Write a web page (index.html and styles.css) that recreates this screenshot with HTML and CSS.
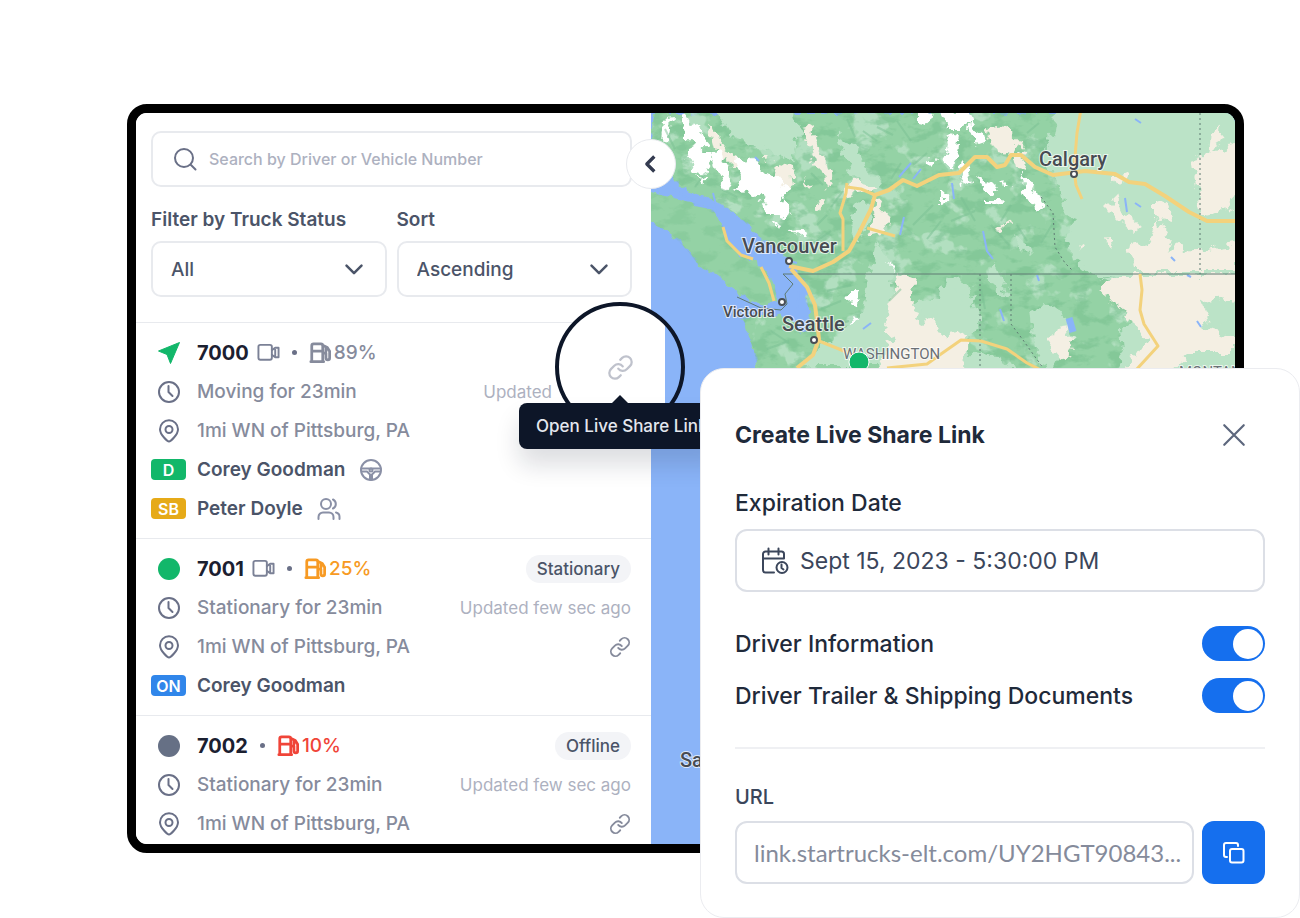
FILE: index.html
```html
<!DOCTYPE html>
<html lang="en">
<head>
  <meta charset="UTF-8" />
  <meta name="viewport" content="width=device-width, initial-scale=1.0"/>
  <title>Fleet Tracker</title>
  <link rel="stylesheet" href="styles.css">
</head>
<body>
  <!-- shared icons -->
  <svg class="sprite" aria-hidden="true">
    <symbol id="i-clock" viewBox="0 0 24 24"><circle cx="12" cy="12" r="10"/><path d="M11.500 6v6l4 4"/></symbol>
    <symbol id="i-pin" viewBox="0 0 24 24"><path d="M12 22.500c-1.300 0-9-6.500-9-12.300a9 9 0 0 1 18 0c0 5.800-7.700 12.300-9 12.300z"/><circle cx="12" cy="10.500" r="3.500"/></symbol>
    <symbol id="i-video" viewBox="0 0 24 24"><rect x="1.500" y="4" width="14" height="15.500" rx="2"/><path d="M15.500 9.500l3.500-2.500h3.500v10H19l-3.500-2.500M19 9v6"/></symbol>
    <symbol id="i-fuel" viewBox="0 0 24 24"><path d="M3 21.500V4a2 2 0 0 1 2-2h8a2 2 0 0 1 2 2v17.500M2 21.500h14M3 10h12M16 4l4 2 2.500 4v7.500a2 2 0 0 1-4 0V12H15M18.500 7v4"/></symbol>
    <symbol id="i-link" viewBox="0 0 24 24"><path d="M10 13a5 5 0 0 0 7.540.540l3-3a5 5 0 0 0-7.070-7.070l-1.720 1.710"/><path d="M14 11a5 5 0 0 0-7.540-.540l-3 3a5 5 0 0 0 7.070 7.070l1.710-1.710"/></symbol>
    <symbol id="i-chevron" viewBox="0 0 24 24"><path d="M3 8l9 9 9-9"/></symbol>
  </svg>

  <div class="stage">
    <main class="frame">
      <aside class="sidebar">
        <form class="filters">
          <label class="search">
            <svg class="icon" viewBox="0 0 24 24"><circle cx="11" cy="11" r="9"/><path d="M18 18l4.500 4.500"/></svg>
            <input type="search" aria-label="Search" placeholder="Search by Driver or Vehicle Number">
          </label>
          <div class="selects">
            <div class="field">
              <label for="status">Filter by Truck Status</label>
              <div class="select">
                <select id="status"><option>All</option></select>
                <svg class="icon"><use href="#i-chevron"/></svg>
              </div>
            </div>
            <div class="field">
              <label for="sort">Sort</label>
              <div class="select">
                <select id="sort"><option>Ascending</option></select>
                <svg class="icon"><use href="#i-chevron"/></svg>
              </div>
            </div>
          </div>
          <button class="collapse" type="button" aria-label="Collapse panel">
            <svg class="icon" viewBox="0 0 24 24"><path d="M16 3l-9 9 9 9"/></svg>
          </button>
        </form>

        <section class="vehicle">
          <div class="row">
            <span class="mark"><svg class="arrow" viewBox="0 0 24 24"><path d="M22.500 1.500L13.500 22.500l-3.500-9-8.500-3.500z"/></svg></span>
            <strong>7000</strong>
            <svg class="icon cam"><use href="#i-video"/></svg>
            <span class="dot"></span>
            <span class="fuel"><svg class="icon"><use href="#i-fuel"/></svg>89%</span>
          </div>
          <div class="row">
            <span class="mark"><svg class="icon"><use href="#i-clock"/></svg></span>
            <span>Moving for 23min</span>
            <small class="updated covered">Updated</small>
          </div>
          <div class="row">
            <span class="mark"><svg class="icon"><use href="#i-pin"/></svg></span>
            <span>1mi WN of Pittsburg, PA</span>
          </div>
          <div class="row">
            <span class="tag green">D</span>
            <span class="name">Corey Goodman</span>
            <svg class="icon role" viewBox="0 0 24 24"><circle cx="12" cy="12" r="10"/><path d="M2.500 10.500h19M3 13.500h5l3 3v5M21 13.500h-5l-3 3v5"/><circle cx="12" cy="12" r="1.500"/></svg>
          </div>
          <div class="row">
            <span class="tag amber">SB</span>
            <span class="name">Peter Doyle</span>
            <svg class="icon role" viewBox="0 0 24 24"><circle cx="9" cy="7" r="5"/><path d="M16 2.500a5 5 0 0 1 0 9M1.500 22v-2a4.500 4.500 0 0 1 4.500-4.500h6a4.500 4.500 0 0 1 4.500 4.500v2M19 15.500a4.500 4.500 0 0 1 3.500 4.500v2"/></svg>
          </div>
          <div class="spotlight">
            <button class="share" type="button" aria-describedby="share-tip" aria-label="Share">
              <svg class="icon"><use href="#i-link"/></svg>
            </button>
            <div class="tooltip" id="share-tip" role="tooltip">Open Live Share Link</div>
          </div>
        </section>

        <section class="vehicle">
          <div class="row">
            <span class="mark"><i class="state green"></i></span>
            <strong>7001</strong>
            <svg class="icon cam"><use href="#i-video"/></svg>
            <span class="dot"></span>
            <span class="fuel low"><svg class="icon"><use href="#i-fuel"/></svg>25%</span>
            <span class="pill">Stationary</span>
          </div>
          <div class="row">
            <span class="mark"><svg class="icon"><use href="#i-clock"/></svg></span>
            <span>Stationary for 23min</span>
            <small class="updated">Updated few sec ago</small>
          </div>
          <div class="row">
            <span class="mark"><svg class="icon"><use href="#i-pin"/></svg></span>
            <span>1mi WN of Pittsburg, PA</span>
            <button class="link" type="button" aria-label="Share"><svg class="icon"><use href="#i-link"/></svg></button>
          </div>
          <div class="row">
            <span class="tag blue">ON</span>
            <span class="name">Corey Goodman</span>
          </div>
        </section>

        <section class="vehicle">
          <div class="row">
            <span class="mark"><i class="state gray"></i></span>
            <strong>7002</strong>
            <span class="dot"></span>
            <span class="fuel empty"><svg class="icon"><use href="#i-fuel"/></svg>10%</span>
            <span class="pill">Offline</span>
          </div>
          <div class="row">
            <span class="mark"><svg class="icon"><use href="#i-clock"/></svg></span>
            <span>Stationary for 23min</span>
            <small class="updated">Updated few sec ago</small>
          </div>
          <div class="row">
            <span class="mark"><svg class="icon"><use href="#i-pin"/></svg></span>
            <span>1mi WN of Pittsburg, PA</span>
            <button class="link" type="button" aria-label="Share"><svg class="icon"><use href="#i-link"/></svg></button>
          </div>
        </section>
      </aside>

      <div class="map">
        <svg viewBox="0 0 584 731" preserveAspectRatio="xMinYMin slice" role="img" aria-label="Map">
          <defs>
            <filter id="rough" x="-5%" y="-5%" width="110%" height="110%">
              <feTurbulence type="fractalNoise" baseFrequency="0.09" numOctaves="3" seed="4"/>
              <feDisplacementMap in="SourceGraphic" scale="16" xChannelSelector="R" yChannelSelector="G"/>
            </filter>
            <filter id="coast" x="-5%" y="-5%" width="110%" height="110%">
              <feTurbulence type="fractalNoise" baseFrequency="0.12" numOctaves="2" seed="8"/>
              <feDisplacementMap in="SourceGraphic" scale="10" xChannelSelector="R" yChannelSelector="G"/>
            </filter>
            <filter id="relief" x="0" y="0" width="100%" height="100%" color-interpolation-filters="sRGB">
              <feTurbulence type="fractalNoise" baseFrequency="0.05 0.08" numOctaves="4" seed="11"/>
              <feColorMatrix values="0 0 0 0 0.48  0 0 0 0 0.76  0 0 0 0 0.57  6 0 0 0 -3"/>
              <feComposite in2="SourceGraphic" operator="in"/>
            </filter>
            <filter id="meadow" x="0" y="0" width="100%" height="100%" color-interpolation-filters="sRGB">
              <feTurbulence type="fractalNoise" baseFrequency="0.035" numOctaves="4" seed="23"/>
              <feColorMatrix values="0 0 0 0 0.73  0 0 0 0 0.89  0 0 0 0 0.78  0 12 0 0 -6.9"/>
              <feComposite in2="SourceGraphic" operator="in"/>
            </filter>
            <path id="land" d="M4 0L0 20 9 47 24 67 36 78 56 85 72 92 86 101 99 115 112 127 126 137 137 145 146 157 155 174 154 187 160 200 158 215 150 222 145 210 132 204 110 202 92 205 96 220 103 237 106 255 130 400H584V0z"/>
            <path id="island" d="M-6 79L19 84 42 90 62 97 71 110 74 124 89 142 102 147 114 157 124 174 127 187 116 192 99 187 79 174 66 162 49 154 36 137 19 120-6 107z"/>
          </defs>
          <rect width="584" height="731" fill="#8ab4f8"/>
          <g filter="url(#coast)" fill="#94d2a5"><use href="#land"/><use href="#island"/></g>
          <use href="#land" filter="url(#meadow)" opacity=".8"/>
          <use href="#land" filter="url(#relief)" opacity=".6"/>
          <use href="#island" filter="url(#relief)" opacity=".4"/>

          <!-- plains and valleys -->
          <g filter="url(#rough)" fill="#bbe3c7">
            <path d="M406-8H600V162H439L422 147 416 127 422 110 412 94 409 77 399 60 389 47 399 27z"/>
            <path d="M62-4L140-4 150 20 140 48 112 34 84 28z"/>
            <path d="M186 20l20 14 10 24 14 10-6 8-18-10-12-20z"/>
            <path d="M203 92l14-8 2 20-12 26-6-12z"/>
            <path d="M226 130l20 28-8 14 20 20 30-10 10-20 20 10 10 40-40 40H150l30-26 30-20z"/>
            <path d="M289 172l18 6 12 30-12 30 40 6 20 14H280z"/>
            <path d="M448 164l26 8 10 40-20 50 60 0H600V162z"/>
            <path d="M380 196l24-4 18 20-6 30-20 20-12-26z"/>
            <path d="M341 150l8 10 8 24-6 2-10-18zM362 122l12 6 6 14-10-6z"/>
          </g>
          <g filter="url(#rough)" fill="#f4efe3">
            <path d="M150 15l12-3 4 20 10 20 6 20-6 2-12-26-8-18z"/>
            <path d="M194 72l12-4 20 6-10 6-20 2z"/>
            <path d="M224 84l6 10 10 12-8 12-16 4 6-20z"/>
            <path d="M247 160l18 4-4 30 20 14 14 20 16 34H224l10-26 10-12-14-8 10-14z"/>
            <path d="M290 222l26-4-2 40h-34z"/>
            <path d="M56 10l10 6 2 12 12 14-8 8-10-16zM76 38l12 6 2 10-12 0zM126 48l16 4 2 22-14 8-6-14zM110 46l10-2-2 6zM165 90l10-2-4 8-6 2zM152 66l10 8-4 4z"/>
            <path d="M336 16l20-2 12 14-8 14-16-4zM358 36l14 8 4 12-14-4zM348 114l10-6-4 8zM362 26l10 2-2 10z"/>
            <path d="M447 178l22-16H600v30l-36 6-14 18 34 10v14l-46 0-20 18-24 6-18-8 10-30-10-26z"/>
            <path d="M540 46l28-8 20-12 4 40-16 32-26 6-4-26z"/>
            <path d="M454 94l12-12 4 16 20 16-8 6-14-12zM462 60l14 4-4 8-10-4zM504 84l10 6 6 18-16-2z"/>
            <path d="M478 134l20-4 10-22 10 20 20 10 46-6v26H484z"/>
            <path d="M403 214l14-2 4 30-10 6-12-14zM560 20l12-8-2 14-12 20zM428 130l6 2-4 6zM456 128l8 0-2 8z"/>
          </g>
          <g filter="url(#rough)" fill="#bbe3c7">
            <path d="M552 190l22-6 10 10v14l-24 2zM470 216l14-4 12 14-10 16-14-6zM516 132l12-6 2 6-10 6zM268 196l10 8-6 8-8-6z"/>
          </g>

          <!-- glaciers -->
          <g filter="url(#rough)" fill="#fff">
            <path d="M30 0l10 4 8 16 8 10-2 8-10-4-10-12zM36 34l16-4 8 14-6 16-12-4-6-12zM58 38l14 2 8 26-4 12-12-18z"/>
            <path d="M82 46l16-2 10 14 18 4 10 16-6 18 2 6-14 0-8-16-14-8-14 2 8-14z"/>
            <path d="M124 90l8-4 8 16-8 6zM140 116l14-2 4 12-10 0zM12 8l8-2-2 16-8 6zM120 106l8 6-2 4zM10 20l6-2 0 6zM46 60l10 4-2 8z"/>
            <path d="M290 2l18-6 14 10-8 8-18 0zM298 20l10 2-4 32-6 4-4-20zM320 6l10 14 8 6-12 4-8-12zM313 48l8 22-8 4-4-16z"/>
            <path d="M325 64l14 6 8 8-14 0zM370 58l12 14 14 22-10 4-14-22zM334 86l18 0-6 8-12-4zM277 44l12 4-6 8-6-6zM268-2l10 0-2 12-8-2z"/>
            <path d="M198 180l10 0-4 14-4-4zM198 202l10 6-8 4zM289 74l8 14-8 2zM234 150l8 2 2 8zM352 68l8 8-6 0z"/>
          </g>

          <!-- mountain streaks -->
          <g class="ridges">
            <path d="M180 94l12-16M166 112l10-10M160 132l20-14M212 18l14 10M226 14l16 8M246 8l14 20M250 50l-10 16M262 52l14-12M160 60l12 12M14 16l10 20M44 74l10-14M70 76l16 8M262 112l20-20M276 126l14-18M300 108l24-10M310 84l14 24M360 92l-10 16M340 112l18 20M250 176l-12 12M176 178l24-6M170 196l20-8M184 212l14-4M120 218l18 12M116 236l22-8M330 176l4 20M366 112l10 16M390 130l12-20M376 20l12-10M196 6l8 18"/>
          </g>

          <!-- lakes and inlets -->
          <g class="lakes">
            <path d="M4 78l14-4 24 14M62 80l6 24M44 92l20 4M130 146l16 4M104 44l4 4M248 64l12-14M262 66l8-10M253 104l-4 18M332 118l4 20 6 8M301 70l2 16M349 196l4 12M474 85l2 14M484 90l6 4M484 6l6 4M520 144l4 4M546 208l4 6M386 162l2 6M212 216l8-6M160 180l2 10M148 178l-2 18M536 162l4 2"/>
            <path class="lake" d="M418 205l4 14"/>
          </g>

          <!-- borders -->
          <g class="borders">
            <path d="M132 161H584"/>
            <path d="M132 161l10 10-8 10 2 10-6 6-20-2-24-11"/>
            <path class="dashed" d="M549 0v161M329 161v94M360 161v50l12 16 20 28M390 84l12 16 2 34 10 16 8 8"/>
          </g>

          <!-- highways -->
          <g class="roads">
            <path class="wide" d="M138 153l24 5 20-9 16-11 10-18 12-24 4-14 14-5 14-10 14 6 22-11 20-2 16-16 12 0 10 10 8-2 6-10 10 0 14 12 18 8 32-4 30 3 14 8 16 2 20 12 24 16 18 9h30l16-4"/>
            <path d="M224 82l-14-6-14-2M192 138V106l-3-6 6-20 1-10"/>
            <path d="M216 115l14 4 14 4"/>
            <path d="M72 114l4 14 14 14 12 4M110 154l8 16 5 18"/>
            <path class="wide" d="M140 156l16 18 8 18 2 16 2 18-6 16-16 13"/>
            <path d="M168 228l20 8 24 10M236 255l40-4 14-10 20-14 20 1 26 8 20 14 16 8"/>
            <path d="M430-4l-4 24-3 36 2 16 6 14M489 161l2 16-2 20 4 14 14 22-22 24"/>
          </g>

          <g class="towns">
            <circle cx="138" cy="148" r="3"/><circle cx="131" cy="189" r="3"/><circle cx="163" cy="227" r="3"/><circle cx="423" cy="61" r="3"/>
          </g>
          <g class="places">
            <text x="91" y="140">Vancouver</text>
            <text x="131" y="218">Seattle</text>
            <text x="388" y="53">Calgary</text>
            <text x="29" y="654">San Francisco</text>
            <text class="small" x="72" y="204">Victoria</text>
            <text class="region" x="192" y="246">WASHINGTON</text>
            <text class="region" x="528" y="264">MONTANA</text>
          </g>
          <circle cx="208" cy="249" r="10" fill="#12b76a" stroke="#fff" stroke-width="1"/>
        </svg>
      </div>
    </main>

    <form class="modal" role="dialog" aria-labelledby="modal-title">
      <header>
        <h1 id="modal-title">Create Live Share Link</h1>
        <button class="close" type="button" aria-label="Close">
          <svg class="icon" viewBox="0 0 24 24"><path d="M3 3l18 18M21 3L3 21"/></svg>
        </button>
      </header>

      <label for="expires">Expiration Date</label>
      <div class="date">
        <svg class="icon" viewBox="0 0 28 28"><path d="M23 11.500V7a2.500 2.500 0 0 0-2.500-2.500h-16A2.500 2.500 0 0 0 2 7v16a2.500 2.500 0 0 0 2.500 2.500H13M2 11.500h21M7.500 1.500v6M17.500 1.500v6"/><circle cx="21" cy="20.500" r="5.500"/><path d="M20.500 17.500v3.500l2 1.500"/></svg>
        <input id="expires" type="text" value="Sept 15, 2023 - 5:30:00 PM">
      </div>

      <div class="toggles">
        <label for="info">Driver Information</label>
        <input id="info" class="toggle" type="checkbox" checked>
        <label for="docs">Driver Trailer &amp; Shipping Documents</label>
        <input id="docs" class="toggle" type="checkbox" checked>
      </div>

      <hr>

      <label class="url-label" for="url">URL</label>
      <div class="url">
        <input id="url" type="text" value="link.startrucks-elt.com/UY2HGT90843..." readonly>
        <button class="copy" type="button" aria-label="Copy link">
          <svg class="icon" viewBox="0 0 24 24"><rect x="8" y="8" width="13.500" height="13.500" rx="2"/><path d="M5 16H4a2 2 0 0 1-2-2V4a2 2 0 0 1 2-2h10a2 2 0 0 1 2 2v1"/></svg>
        </button>
      </div>
    </form>
  </div>
</body>
</html>
```
FILE: styles.css
```css
:root {
  --ink: #1f2a3a;
  --text: #4b5468;
  --muted: #868b9c;
  --faint: #adb1bf;
  --line: #e8eaee;
  --blue: #156fee;
  --green: #12b76a;
  --navy: #0d1628;
  --sea: #8ab4f8;
}
* { box-sizing: border-box; margin: 0; padding: 0; }
body {
  background: #fff;
  color: var(--text);
  font-family: 'Inter', 'Liberation Sans', sans-serif;
}
input, select, button {
  font: inherit;
  color: inherit;
  border: none;
  background: none;
  outline: none;
}
button { cursor: pointer; }
.sprite { display: none; }
.icon {
  display: block;
  flex: none;
  width: 24px;
  height: 24px;
  fill: none;
  stroke: currentColor;
  stroke-width: 2;
  stroke-linecap: round;
  stroke-linejoin: round;
}
.stage {
  position: relative;
  min-height: 100vh;
  padding: 104px 56px 65px 127px;
}
.frame {
  display: flex;
  height: calc(100vh - 169px);
  min-height: 560px;
  border: 9px solid #000;
  border-radius: 20px;
  overflow: hidden;
}

/* side panel */
.sidebar {
  position: relative;
  z-index: 1;
  flex: none;
  width: 515px;
  background: #fff;
}
.filters {
  position: relative;
  padding: 18px 19px 25px 15px;
}
.search {
  display: flex;
  align-items: center;
  gap: 12px;
  height: 56px;
  padding: 0 20px;
  border: 2px solid var(--line);
  border-radius: 10px;
}
.search .icon { color: #6a7087; }
.search input { flex: 1; font-size: 16px; font-weight: 500; }
.search input::placeholder { color: var(--faint); opacity: 1; }
.selects {
  display: grid;
  grid-template-columns: 1fr 1fr;
  gap: 10px;
  margin-top: 20px;
}
.field label {
  display: block;
  margin-bottom: 8px;
  font-size: 19px;
  font-weight: 600;
  line-height: 26px;
}
.select { display: grid; align-items: center; }
.select select, .select .icon { grid-area: 1 / 1; }
.select select {
  appearance: none;
  height: 56px;
  padding: 0 18px;
  border: 2px solid var(--line);
  border-radius: 10px;
  font-size: 19px;
  font-weight: 500;
}
.select .icon {
  width: 20px;
  height: 20px;
  margin-right: 23px;
  justify-self: end;
  stroke-width: 3;
  pointer-events: none;
}
.collapse {
  position: absolute;
  top: 26px;
  right: -25px;
  display: grid;
  place-items: center;
  width: 50px;
  height: 50px;
  background: #fff;
  border: 1px solid var(--line);
  border-radius: 50%;
  color: #343b50;
}
.collapse .icon { width: 20px; height: 20px; stroke-width: 4; stroke-linecap: butt; }

.vehicle {
  position: relative;
  padding: 10px 20px 10px 15px;
  border-top: 1px solid var(--line);
  font-size: 19px;
  font-weight: 500;
  color: var(--muted);
}
.row {
  display: flex;
  align-items: center;
  height: 39px;
  white-space: nowrap;
}
.mark, .tag {
  display: grid;
  place-items: center;
  flex: none;
  width: 35px;
  margin-right: 11px;
  color: #6a7087;
}
.tag {
  height: 21px;
  border-radius: 4px;
  color: #fff;
  font-size: 16px;
  font-weight: 600;
}
.green { background: var(--green); }
.amber { background: #e6aa18; }
.blue { background: #3086ea; }
.gray { background: #667085; }
.state { width: 22px; height: 22px; border-radius: 50%; }
.arrow {
  width: 24px;
  height: 24px;
  fill: var(--green);
  stroke: var(--green);
  stroke-linejoin: round;
}
.row strong { font-size: 20px; font-weight: 700; color: #1b2030; }
.cam { width: 23px; height: 23px; margin-left: 8px; color: #7b8196; }
.dot {
  width: 5px;
  height: 5px;
  margin: 0 12px;
  border-radius: 50%;
  background: #6a7087;
}
.fuel { display: flex; align-items: center; gap: 3px; }
.fuel .icon { width: 22px; height: 22px; stroke-width: 3; }
.low { color: #f79a23; }
.empty { color: #f04438; }
.name { color: var(--text); font-weight: 600; }
.role { margin-left: 14px; color: #8a90a6; }
.updated { margin-left: auto; font-size: 17px; font-weight: 400; color: var(--faint); }
.covered { margin-right: 79px; }
.pill {
  margin-left: auto;
  padding: 0 11px;
  border-radius: 14px;
  background: #f3f4f7;
  color: var(--text);
  font-size: 17px;
  line-height: 28px;
}
.link { margin-left: auto; color: var(--muted); }
.link .icon { width: 22px; height: 22px; }

.spotlight {
  position: absolute;
  top: -21px;
  right: -34px;
  width: 130px;
  height: 130px;
}
.share {
  display: grid;
  place-items: center;
  width: 100%;
  height: 100%;
  border: 4px solid var(--navy);
  border-radius: 50%;
  background: linear-gradient(90deg, #fff 106px, var(--sea) 106px);
  color: #bfc2cc;
}
.share .icon { width: 27px; height: 27px; }
.tooltip {
  position: absolute;
  top: 101px;
  left: -36px;
  padding: 0 17px;
  border-radius: 8px;
  background: var(--navy);
  box-shadow: 0 16px 24px rgba(16, 24, 40, 0.14);
  color: #e4e7ee;
  font-size: 17px;
  font-weight: 500;
  line-height: 46px;
  white-space: nowrap;
}
.tooltip::before {
  content: "";
  position: absolute;
  top: -8px;
  left: 92px;
  border: 9px solid transparent;
  border-top: 0;
  border-bottom-color: var(--navy);
}

/* map */
.map { flex: 1; min-width: 0; background: var(--sea); }
.map svg { display: block; width: 100%; height: 100%; }
.ridges { fill: none; stroke: #79c093; stroke-width: 2; opacity: 0.5; }
.lakes { fill: none; stroke: var(--sea); stroke-width: 2; }
.lakes .lake { stroke-width: 7; }
.borders { fill: none; stroke: #5e7a72; stroke-width: 1; }
.dashed { stroke-dasharray: 2 3; }
.roads { fill: none; stroke: #f3d27c; stroke-width: 3; stroke-linejoin: round; }
.roads .wide { stroke-width: 4; }
.towns { fill: #fff; stroke: #4a4f55; stroke-width: 2; }
.places {
  font-family: Roboto, sans-serif;
  font-size: 20px;
  font-weight: 500;
  fill: #474b52;
  stroke: #fff;
  stroke-width: 2px;
  stroke-opacity: 0.7;
  paint-order: stroke;
}
.places .small { font-size: 15px; }
.places .region { font-size: 15px; font-weight: 400; fill: #6b7075; }

/* share dialog */
.modal {
  position: absolute;
  right: 0;
  bottom: 0;
  z-index: 2;
  width: 600px;
  max-width: 100%;
  padding: 48px 34px 33px;
  background: #fff;
  border: 1px solid #ebecf0;
  border-radius: 24px;
  color: var(--ink);
  font-size: 23px;
}
.modal header {
  display: flex;
  align-items: center;
  justify-content: space-between;
  height: 36px;
  margin-bottom: 36px;
  padding-right: 18px;
}
.modal h1 { font-size: 23px; font-weight: 700; }
.close { color: #5d677d; }
.close .icon { width: 26px; height: 26px; }
.modal label { display: block; font-weight: 500; line-height: 28px; }
.date {
  display: flex;
  align-items: center;
  gap: 11px;
  height: 63px;
  margin-top: 12px;
  padding: 0 24px;
  border: 2px solid #dcdfe6;
  border-radius: 12px;
  color: #3b465b;
}
.date .icon { width: 28px; height: 28px; }
.date input { flex: 1; min-width: 0; }
.toggles {
  display: grid;
  grid-template-columns: 1fr auto;
  align-items: center;
  gap: 17px;
  margin-top: 34px;
}
.toggle {
  appearance: none;
  display: flex;
  align-items: center;
  width: 63px;
  height: 35px;
  padding: 0 2px;
  border-radius: 18px;
  background: #d0d5dd;
  cursor: pointer;
}
.toggle::before {
  content: "";
  width: 30px;
  height: 30px;
  border-radius: 50%;
  background: #fff;
}
.toggle:checked { justify-content: flex-end; background: var(--blue); }
.modal hr { margin: 34px 0; border: none; border-top: 2px solid #eff0f3; }
.modal .url-label { font-size: 20px; color: #3b465b; }
.url { display: flex; gap: 8px; margin-top: 10px; }
.url input {
  flex: 1;
  min-width: 0;
  height: 63px;
  padding: 0 8px 0 17px;
  border: 2px solid #dcdfe6;
  border-radius: 12px;
  color: #858b9b;
  font-family: Lato, sans-serif;
  font-size: 24px;
}
.copy {
  display: grid;
  place-items: center;
  width: 63px;
  height: 63px;
  border-radius: 12px;
  background: var(--blue);
  color: #fff;
}
```
